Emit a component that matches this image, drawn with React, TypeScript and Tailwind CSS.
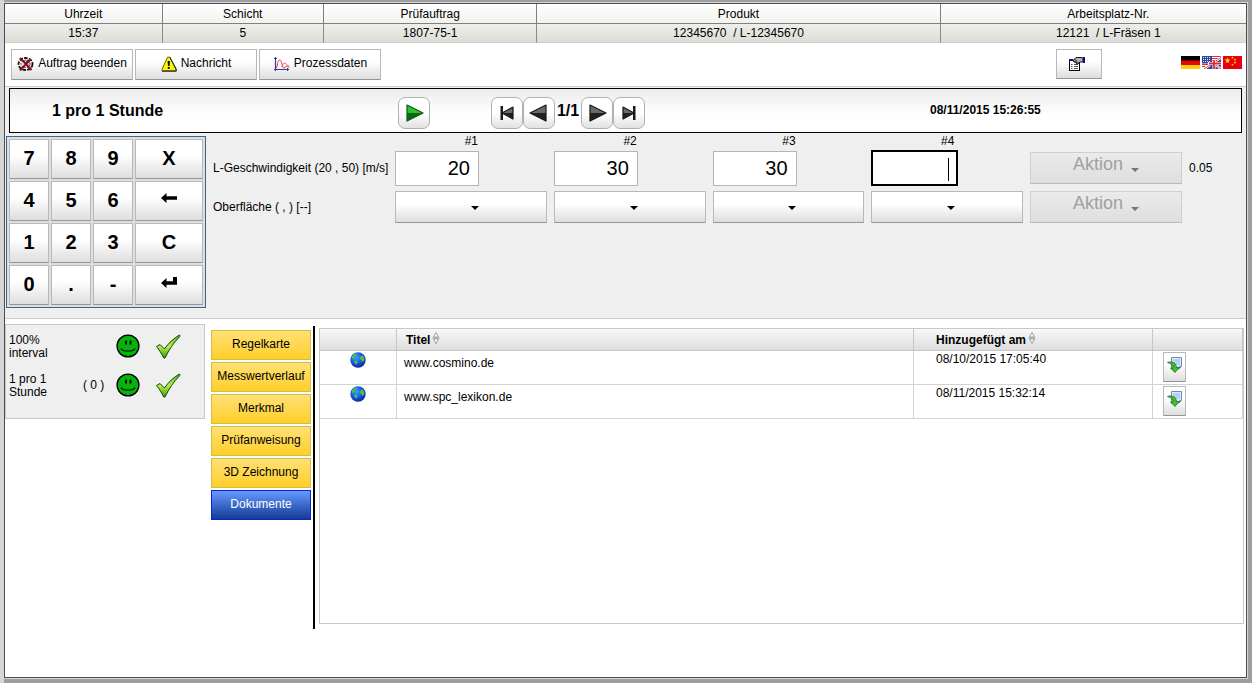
import type { ReactNode } from 'react';
import clsx from 'clsx';

const headerCells = [
    { label: 'Uhrzeit', value: '15:37', width: 'w-[12.7%]' },
    { label: 'Schicht', value: '5', width: 'w-[13%]' },
    { label: 'Prüfauftrag', value: '1807-75-1', width: 'w-[17.2%]' },
    { label: 'Produkt', value: '12345670  / L-12345670', width: 'w-[32.5%]' },
    { label: 'Arbeitsplatz-Nr.', value: '12121  / L-Fräsen 1', width: 'w-[24.6%]' },
];

const samples = [
    { label: '#1', value: '20' },
    { label: '#2', value: '30' },
    { label: '#3', value: '30' },
    { label: '#4', value: '', active: true },
];

const tabs = ['Regelkarte', 'Messwertverlauf', 'Merkmal', 'Prüfanweisung', '3D Zeichnung', 'Dokumente'];

const documents = [
    { title: 'www.cosmino.de', added: '08/10/2015 17:05:40' },
    { title: 'www.spc_lexikon.de', added: '08/11/2015 15:32:14' },
];

const raised = 'border border-[#b9b9b9] border-b-[#969696] bg-linear-to-b from-white from-40% to-[#dedede]';

/* ---------- Icons ---------- */

function CancelOrderIcon() {
    return (
        <svg width="17" height="16" viewBox="0 0 17 16" className="shrink-0">
            <ellipse cx="8.5" cy="8" rx="7" ry="6" fill="#fff" stroke="#111" strokeWidth="1.8" strokeDasharray="3.6 1.2" />
            <ellipse cx="8.5" cy="8" rx="4.6" ry="3.8" fill="#e4e4e4" stroke="#333" strokeWidth="1" strokeDasharray="2 1" />
            <path d="m8 8 3.500-4" stroke="#222" strokeWidth="1.400" />
            <path d="m3 2 6 6 5.500 6M14 3 9 8l-6 6.500" stroke="#8c0d12" strokeWidth="2" fill="none" />
        </svg>
    );
}

function WarningIcon() {
    return (
        <svg width="16" height="16" viewBox="0 0 16 16" className="shrink-0">
            <path d="M6.5 1.200h2.200L15 13.400v1.400H1v-1.400z" fill="#f8f40c" stroke="#6a6700" strokeWidth="1" />
            <path d="M8.800 1 15.200 13v2.200H1" fill="none" stroke="#222" strokeWidth="1" />
            <path d="M6.600 5h2.300l-.4 5H7z" />
            <rect x="6.800" y="11" width="1.900" height="1.800" />
        </svg>
    );
}

function ProcessIcon() {
    return (
        <svg width="17" height="16" viewBox="0 0 17 16" className="shrink-0" fill="none">
            <path d="M2.500 1v14M1 13.500h15M1 2.500h3M14.500 12v3" stroke="#3438a8" strokeWidth="1.200" />
            <path d="M3.500 12C5 8 4.500 4 6.500 4S8.500 7 9.500 10s2 2.500 3 1 1.500-1.500 4 .5" stroke="#e5303c" />
            <path d="M8.500 11C10 9 10.500 6.500 12 7s2 3 4 3" stroke="#ee6a72" />
        </svg>
    );
}

/* Hand holding a property sheet */
function PropertiesIcon() {
    return (
        <svg width="17" height="15" viewBox="0 0 17 15">
            <rect x=".5" y="4.500" width="10" height="10" fill="#fff" stroke="#000" />
            <path d="M2 8.500h1.500M5 8.500h4M2 10.500h1.500M5 10.500h4M2 12.500h1.500M5 12.500h4" stroke="#555" />
            <path d="M4 4.500 7 1.500h5l2 .5v4h-3.500L9 8H7.500L8 6H5z" fill="#b5b5b0" stroke="#000" strokeWidth=".9" />
            <path d="M4 4.500 7 7M5.500 3 8 5.500" stroke="#000" strokeWidth=".8" />
            <rect x="14" y="1" width="2" height="6" fill="#0b0b8c" />
            <rect x="0" y="3" width="4" height="2" fill="#0b0b8c" />
        </svg>
    );
}

function GermanFlag() {
    return (
        <svg width="19" height="13" viewBox="0 0 19 13">
            <rect width="19" height="5" fill="#000" />
            <rect y="4.500" width="19" height="4.500" fill="#e10600" />
            <rect y="9" width="19" height="4" fill="#fdd00e" />
        </svg>
    );
}

/* US flag top left, British flag bottom right */
function EnglishFlag() {
    return (
        <svg width="19" height="13" viewBox="0 0 19 13">
            <rect width="19" height="13" fill="#fff" />
            <path d="M9 .5h10M9 2.500h8M9 4.500h5" stroke="#e02b35" />
            <path d="M0 8.500h6M0 10.500h3" stroke="#e02b35" />
            <rect width="10" height="7.500" fill="#31459c" />
            <path d="M1 1.500h8M1 3.500h8M1 5.500h8" stroke="#dfe5ff" strokeDasharray="1 1" />
            <path d="M3 13 19 2v11z" fill="#31459c" />
            <path d="m2 13 6-4M14 5l5-3.500M14 9l5 4" stroke="#fff" strokeWidth="2.400" />
            <path d="m2 13 6-4M14 5l5-3.500M14 9l5 4" stroke="#e02b35" strokeWidth=".9" />
            <path d="M6 7.500h13M12 3.500V13" stroke="#fff" strokeWidth="3" />
            <path d="M7 7.500h12M12 4v9" stroke="#e02b35" strokeWidth="1.800" />
        </svg>
    );
}

function ChineseFlag() {
    return (
        <svg width="19" height="13" viewBox="0 0 19 13" fill="#ffde00">
            <rect width="19" height="13" fill="#e60012" />
            <path d="m4.500 1.500.8 2.100h2.200L5.700 5l.7 2.200-1.900-1.300-1.900 1.300.7-2.200-1.800-1.400h2.200z" />
            <circle cx="9.500" cy="1.700" r=".9" />
            <circle cx="12" cy="3.600" r=".9" />
            <circle cx="12" cy="6.500" r=".9" />
            <circle cx="9.500" cy="8.600" r=".9" />
        </svg>
    );
}

/* Glossy triangle, optionally with a stop bar on the pointed side */
function ArrowIcon({ left, bar, green }: { left?: boolean; bar?: boolean; green?: boolean }) {
    const x = bar ? 5 : 4;
    const tip = bar ? 16 : 20;
    const top = bar ? 5 : 3;
    const bottom = 22 - top;
    return (
        <svg width="22" height="22" viewBox="0 0 22 22" className={clsx(left && '-scale-x-100')}>
            <path d={`M${x} ${top} ${tip} 11H${x}z`} fill={green ? '#2fc22f' : '#6a6a6a'} />
            <path d={`M${x} 11H${tip}L${x} ${bottom}z`} fill={green ? '#0c6b12' : '#222'} />
            <path
                d={`M${x} ${top} ${tip} 11 ${x} ${bottom}z`}
                fill="none"
                stroke={green ? '#0b5a10' : '#161616'}
                strokeWidth="1.200"
                strokeLinejoin="round"
            />
            {bar && <rect x="15" y="4" width="2.500" height="14" fill="#1a1a1a" />}
        </svg>
    );
}

function BackspaceIcon() {
    return (
        <svg width="18" height="12" viewBox="0 0 18 12" className="mb-1">
            <path d="M1 6 6.500 1v3.200H17v3.600H6.500V11z" />
        </svg>
    );
}

function EnterIcon() {
    return (
        <svg width="18" height="14" viewBox="0 0 18 14" className="mb-1">
            <path d="M1 8 6.500 3v3.200H13V2h4v7.800H6.500V13z" />
        </svg>
    );
}

function SmileyIcon() {
    return (
        <svg width="24" height="24" viewBox="0 0 24 24">
            <circle cx="12" cy="12" r="10.900" fill="#05b40a" stroke="#000" strokeWidth="1.400" />
            <ellipse cx="10" cy="8.500" rx="1.100" ry="2.200" />
            <ellipse cx="14.500" cy="8.500" rx="1.100" ry="2.200" />
            <path d="M5 14.500c1 2 3.500 2.700 7 2.700s6-.7 7-2.700" fill="none" stroke="#000" strokeWidth="1.200" />
        </svg>
    );
}

function CheckIcon() {
    return (
        <svg width="26" height="25" viewBox="0 0 26 25">
            <defs>
                <linearGradient id="check" x1="0" y1="0" x2="0" y2="1">
                    <stop offset="0" stopColor="#4fb81c" />
                    <stop offset=".5" stopColor="#b9ef4a" />
                    <stop offset="1" stopColor="#2f9a10" />
                </linearGradient>
            </defs>
            <path
                d="M1.500 12.500 5 10.500l4.500 4.500C13.500 9 18.500 4.500 24.500 1c.5.500.5 1 0 1.800C18.500 9 14 15.500 10 24c-.5.300-1 .3-1.200 0C6.500 19.500 4 15.500 1.500 12.500z"
                fill="url(#check)"
                stroke="#17400a"
                strokeWidth="1"
                strokeLinejoin="round"
            />
        </svg>
    );
}

function GlobeIcon() {
    return (
        <svg width="16" height="16" viewBox="0 0 16 16">
            <defs>
                <radialGradient id="globe" cx=".4" cy=".35" r=".7">
                    <stop offset="0" stopColor="#4b9bff" />
                    <stop offset=".5" stopColor="#1d5af0" />
                    <stop offset="1" stopColor="#0a1f8a" />
                </radialGradient>
            </defs>
            <circle cx="8" cy="8" r="7.700" fill="url(#globe)" />
            <path d="M2 4.500C3.500 2 5.500 1.200 7.500 1.500L6 3.500l-1.500 1L4 6.500 2 7zM4.500 8.500l2.500.5.5 1.500-1.500 2-1.500-1.500zM10.500 4.500l2-1 1.500 2 .5 2.500-1.500 2-1.500-1.500-1.500-2z" fill="#46cf2c" />
        </svg>
    );
}

function DownloadIcon() {
    return (
        <svg width="15" height="16" viewBox="0 0 15 16">
            <path d="M4.500.5h10V9l-2.500 3H4.500z" fill="#dceafc" stroke="#6d86bd" />
            <path d="M6 3h7M6 5h7M6 7h7" stroke="#8db6ee" />
            <path d="M12 12V9.500h2.500z" fill="#51699c" />
            <path d="M.5 5.500C5 4 9 5.500 9.500 10.500H12L8 15.500 3.500 11h2.700C6 8 4 6.500.5 5.500z" fill="#3fbf2a" stroke="#14700e" strokeWidth=".8" />
        </svg>
    );
}

function SortIcon() {
    return (
        <svg width="8" height="12" viewBox="0 0 8 12" fill="#fff" stroke="#8a8a8a" strokeWidth=".8" className="mb-1 shrink-0">
            <path d="M4 .5 6.500 5h-5zM1.500 7h5L4 11.500zM.5 6h7" />
        </svg>
    );
}

function Caret({ className }: { className?: string }) {
    return (
        <svg width="8" height="4" viewBox="0 0 8 4" fill="currentColor" className={className}>
            <path d="M0 0h8L4 4z" />
        </svg>
    );
}

/* ---------- Controls ---------- */

function ToolButton({ icon, children }: { icon: ReactNode; children: ReactNode }) {
    return (
        <button className={clsx('flex h-[31px] w-[122px] items-center justify-center gap-1 whitespace-nowrap pb-1', raised)}>
            <span className="pt-0.5">{icon}</span>
            {children}
        </button>
    );
}

function NavButton({ label, children }: { label: string; children: ReactNode }) {
    return (
        <button
            aria-label={label}
            className="flex size-8 items-center justify-center rounded-[7px] border border-[#b0b0b0] bg-linear-to-b from-white from-50% to-[#e2e2e2]"
        >
            {children}
        </button>
    );
}

function Key({ label, children }: { label?: string; children: ReactNode }) {
    return (
        <button aria-label={label} className={clsx('flex h-10 items-center justify-center pb-0.5 text-xl font-bold', raised)}>
            {children}
        </button>
    );
}

function ActionButton() {
    return (
        <button
            disabled
            className="flex h-8 w-full items-start justify-center gap-2 border border-[#cfcfcf] border-b-[#b9b9b9] bg-linear-to-b from-[#ebebeb] to-[#dedede] text-lg leading-[22px] text-[#a0a0a0]"
        >
            Aktion
            <Caret className="mt-[15px] text-[#777]" />
        </button>
    );
}

function Keypad() {
    return (
        <div className="grid shrink-0 grid-cols-[40px_40px_40px_68px] gap-0.5 self-start border border-[#336699] bg-[#dedede] p-0.5">
            <Key>7</Key>
            <Key>8</Key>
            <Key>9</Key>
            <Key>X</Key>
            <Key>4</Key>
            <Key>5</Key>
            <Key>6</Key>
            <Key label="Rücktaste"><BackspaceIcon /></Key>
            <Key>1</Key>
            <Key>2</Key>
            <Key>3</Key>
            <Key>C</Key>
            <Key>0</Key>
            <Key>.</Key>
            <Key>-</Key>
            <Key label="Eingabe"><EnterIcon /></Key>
        </div>
    );
}

function Measurements() {
    return (
        <div className="grid flex-1 grid-cols-[175px_repeat(5,minmax(0,1fr))_57px] grid-rows-[14px_36px_37px] items-center gap-x-[7px] self-start">
            <span />
            {samples.map((s) => (
                <span key={s.label} className="w-[83px] pb-1 text-right">{s.label}</span>
            ))}
            <span />
            <span />

            <span className="whitespace-nowrap">L-Geschwindigkeit (20 , 50) [m/s]</span>
            {samples.map((s) => (
                <div key={s.label} className="relative">
                    <input
                        aria-label={`L-Geschwindigkeit ${s.label}`}
                        defaultValue={s.value}
                        className={clsx(
                            'block bg-white px-2 text-right text-xl outline-none',
                            s.active ? 'h-9 w-[87px] border-2 border-black' : 'h-[35px] w-[84px] border border-[#b5b5b5]'
                        )}
                    />
                    {s.active && <span className="absolute left-[77px] top-2 h-[23px] w-px bg-black" />}
                </div>
            ))}
            <ActionButton />
            <span>0.05</span>

            <span className="pt-1">Oberfläche ( , ) [--]</span>
            {samples.map((s) => (
                <div key={s.label} className="relative self-end">
                    <select aria-label={`Oberfläche ${s.label}`} className={clsx('block h-8 w-full appearance-none', raised)}>
                        <option value=""></option>
                    </select>
                    <Caret className="pointer-events-none absolute left-1/2 top-[15px]" />
                </div>
            ))}
            <div className="self-end">
                <ActionButton />
            </div>
        </div>
    );
}

function StatusRow({ name, count }: { name: string; count?: string }) {
    return (
        <div className="grid h-[39px] grid-cols-[69px_38px_auto] items-center leading-[13px]">
            <span className="w-12 pt-0.5">{name}</span>
            <span className="pl-[5px] pt-0.5">{count}</span>
            <span className="flex gap-[15px] pt-0.5">
                <SmileyIcon />
                <CheckIcon />
            </span>
        </div>
    );
}

function DocumentTable() {
    const cell = 'border-b border-r border-[#d3d3d3] align-top';
    const head = 'border-b border-r border-[#c6c6c6] text-left font-bold';
    return (
        <div className="min-w-0 flex-1 border border-[#c8c8c8]">
            <table className="w-full table-fixed border-separate border-spacing-0">
                <thead>
                    <tr className="h-[22px] bg-linear-to-b from-[#f9f9f9] to-[#dcdcdc]">
                        <th className={clsx(head, 'w-[77px]')} />
                        <th className={clsx(head, 'pl-[9px]')}>
                            <span className="flex items-center gap-0.5">Titel <SortIcon /></span>
                        </th>
                        <th className={clsx(head, 'w-[239px] pl-[22px]')}>
                            <span className="flex items-center gap-0.5">Hinzugefügt am <SortIcon /></span>
                        </th>
                        <th className={clsx(head, 'w-[90px]')} />
                    </tr>
                </thead>
                <tbody>
                    {documents.map((d) => (
                        <tr key={d.title} className="h-[34px]">
                            <td className={cell}>
                                <div className="flex justify-center pt-px"><GlobeIcon /></div>
                            </td>
                            <td className={clsx(cell, 'pl-[7px] pt-1')}>{d.title}</td>
                            <td className={clsx(cell, 'pl-[22px]')}>{d.added}</td>
                            <td className={clsx(cell, 'pb-0.5 pl-[10px] pt-px')}>
                                <button
                                    aria-label={`${d.title} öffnen`}
                                    className={clsx('flex h-[30px] w-[23px] items-center justify-center pb-1', raised)}
                                >
                                    <DownloadIcon />
                                </button>
                            </td>
                        </tr>
                    ))}
                </tbody>
            </table>
        </div>
    );
}

export default function App() {
    return (
        <div className="flex min-h-screen flex-col bg-white pb-[5px] pr-0.5 font-['Liberation_Sans',Arial,sans-serif] text-xs leading-4 text-black">
            {/* Window frame */}
            <div className="flex flex-1 flex-col bg-[linear-gradient(90deg,#d4d6d8_4px,#9c9ea0_4px)] pb-[5px] pl-1 pr-[5px] pt-[3px]">
                <div className="flex flex-1 flex-col border border-[#4c4c4e] bg-white shadow-[0_0_0_1px_#d4d6d8]">
                    <table className="w-full table-fixed border-separate border-spacing-0 text-center">
                        <thead>
                            <tr className="h-5 bg-linear-to-b from-white to-[#f1f1ef]">
                                {headerCells.map((c) => (
                                    <th key={c.label} className={clsx('border-b border-r border-[#808080] font-normal last:border-r-0 last:pl-[30px]', c.width)}>
                                        {c.label}
                                    </th>
                                ))}
                            </tr>
                        </thead>
                        <tbody>
                            <tr className="h-[19px] bg-linear-to-b from-[#eeeeeb] to-[#dcdcd6]">
                                {headerCells.map((c) => (
                                    <td key={c.label} className="whitespace-pre border-b border-r border-b-[#cfcfcf] border-r-[#8a8a8a] last:border-r-0 last:pl-[30px]">
                                        {c.value}
                                    </td>
                                ))}
                            </tr>
                        </tbody>
                    </table>

                    {/* Toolbar */}
                    <div className="flex items-start gap-0.5 pb-1.5 pl-1.5 pr-1 pt-1.5">
                        <ToolButton icon={<CancelOrderIcon />}>Auftrag beenden</ToolButton>
                        <ToolButton icon={<WarningIcon />}>Nachricht</ToolButton>
                        <ToolButton icon={<ProcessIcon />}>Prozessdaten</ToolButton>
                        <button
                            aria-label="Einstellungen"
                            className={clsx('ml-auto mr-[77px] flex h-[30px] w-[46px] items-center justify-center pb-0.5 pr-1', raised)}
                        >
                            <PropertiesIcon />
                        </button>
                        <div className="flex pt-[7px]">
                            <button aria-label="Deutsch" className="mr-0.5"><GermanFlag /></button>
                            <button aria-label="English" className="mr-0.5"><EnglishFlag /></button>
                            <button aria-label="中文"><ChineseFlag /></button>
                        </div>
                    </div>

                    {/* Inspection panel */}
                    <section className="border-y border-[#cccccc] bg-[#efefef] pb-2.5 pt-px">
                        <div className="mx-1 grid h-[45px] grid-cols-[388px_93px_1fr_311px] items-center border border-black bg-linear-to-b from-[#ececec] to-white to-60%">
                            <h1 className="pl-[42px] text-base font-bold">1 pro 1 Stunde</h1>
                            <div className="pt-1">
                                <NavButton label="Starten"><ArrowIcon green /></NavButton>
                            </div>
                            <div className="flex items-center pt-1">
                                <NavButton label="Erste"><ArrowIcon left bar /></NavButton>
                                <NavButton label="Zurück"><ArrowIcon left /></NavButton>
                                <span className="w-[26px] pb-1 text-center text-base font-bold">1/1</span>
                                <NavButton label="Weiter"><ArrowIcon /></NavButton>
                                <NavButton label="Letzte"><ArrowIcon bar /></NavButton>
                            </div>
                            <time className="pb-0.5 font-bold">08/11/2015 15:26:55</time>
                        </div>
                        <div className="flex gap-[7px] pl-px pt-[3px]">
                            <Keypad />
                            <Measurements />
                        </div>
                    </section>

                    {/* Lower area */}
                    <div className="flex flex-1 items-stretch pb-12 pr-0.5 pt-[5px]">
                        <div className="w-[200px] self-start border border-[#c8c8c8] bg-[#efefef] pb-3.5 pl-[3px] pt-px">
                            <StatusRow name="100% interval" />
                            <StatusRow name="1 pro 1 Stunde" count="( 0 )" />
                        </div>
                        <nav className="ml-1.5 flex w-[100px] flex-col gap-0.5 pt-1.5">
                            {tabs.map((t) => (
                                <button
                                    key={t}
                                    className={clsx(
                                        'h-[30px] border bg-linear-to-b pb-0.5',
                                        t === 'Dokumente'
                                            ? 'border-[#0a22d8] from-[#6699ff] to-[#143c96] text-white'
                                            : 'border-[#cdbf47] from-[#ffe070] to-[#ffcf1f]'
                                    )}
                                >
                                    {t}
                                </button>
                            ))}
                        </nav>
                        <div className="ml-0.5 mr-1 mt-0.5 w-0.5 bg-black" />
                        <div className="flex min-w-0 flex-1 pb-[5px] pt-1">
                            <DocumentTable />
                        </div>
                    </div>
                </div>
            </div>
        </div>
    );
}
